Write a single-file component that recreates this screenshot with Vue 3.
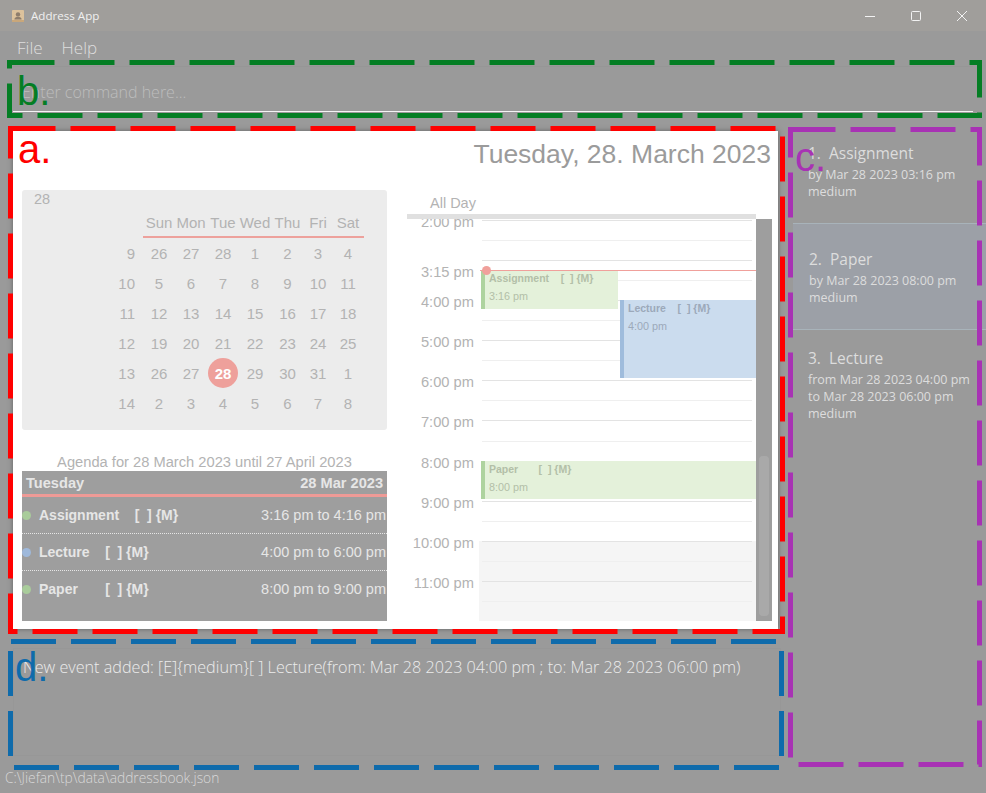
<script setup>
const weeks = [
  { wk: 9, days: [26, 27, 28, 1, 2, 3, 4] },
  { wk: 10, days: [5, 6, 7, 8, 9, 10, 11] },
  { wk: 11, days: [12, 13, 14, 15, 16, 17, 18] },
  { wk: 12, days: [19, 20, 21, 22, 23, 24, 25] },
  { wk: 13, days: [26, 27, 28, 29, 30, 31, 1] },
  { wk: 14, days: [2, 3, 4, 5, 6, 7, 8] }
]
const dayNames = ['Sun', 'Mon', 'Tue', 'Wed', 'Thu', 'Fri', 'Sat']

const agenda = [
  { id: 1, title: 'Assignment    [  ] {M}', time: '3:16 pm to 4:16 pm', color: 'green' },
  { id: 2, title: 'Lecture    [  ] {M}', time: '4:00 pm to 6:00 pm', color: 'blue' },
  { id: 3, title: 'Paper       [  ] {M}', time: '8:00 pm to 9:00 pm', color: 'green' }
]

const hours = ['2:00 pm', '', '4:00 pm', '5:00 pm', '6:00 pm', '7:00 pm', '8:00 pm', '9:00 pm', '10:00 pm', '11:00 pm']
const slots = Array.from({ length: 20 }, (_, i) => ({ id: i, hour: i % 2 === 0, off: i >= 16 }))

const events = [
  { id: 1, title: 'Assignment    [  ] {M}', time: '3:16 pm', color: 'green', top: 51, left: 74, width: 137, height: 39 },
  { id: 2, title: 'Lecture    [  ] {M}', time: '4:00 pm', color: 'blue', top: 81, left: 213, width: 136, height: 78 },
  { id: 3, title: 'Paper       [  ] {M}', time: '8:00 pm', color: 'green', top: 242, left: 74, width: 275, height: 38 }
]

const tasks = [
  { id: 1, name: 'Assignment', lines: ['by Mar 28 2023 03:16 pm', 'medium'] },
  { id: 2, name: 'Paper', lines: ['by Mar 28 2023 08:00 pm', 'medium'], selected: true },
  { id: 3, name: 'Lecture', lines: ['from Mar 28 2023 04:00 pm', 'to Mar 28 2023 06:00 pm', 'medium'] }
]
</script>

<template>
  <div class="window">
    <header class="titlebar">
      <svg class="app-icon" width="14" height="14" viewBox="0 0 14 14">
        <rect x="1" y="1" width="12" height="12" rx="1" fill="#dcc29c" />
        <rect x="1" y="11" width="12" height="2" fill="#c9a77a" />
        <circle cx="7" cy="5.4" r="2.2" fill="#8d7d6c" />
        <path d="M3.4 10.5c0-2 1.6-2.8 3.6-2.8s3.6.8 3.6 2.8z" fill="#8d7d6c" />
      </svg>
      <span class="app-name">Address App</span>
      <div class="win-btns">
        <svg width="12" height="12" viewBox="0 0 12 12"><path d="M1 6.5h10" stroke="#f2f2f2" fill="none" /></svg>
        <svg width="12" height="12" viewBox="0 0 12 12"><rect x="1.5" y="1.5" width="9" height="9" rx="1" stroke="#f2f2f2" fill="none" /></svg>
        <svg width="12" height="12" viewBox="0 0 12 12"><path d="M1 1l10 10M11 1L1 11" stroke="#f2f2f2" fill="none" /></svg>
      </div>
    </header>

    <nav class="menubar">
      <span>File</span>
      <span>Help</span>
    </nav>

    <div class="command">Enter command here...</div>

    <div class="content">
      <div class="left-col">
        <section class="calendar">
          <h1 class="cal-title">Tuesday, 28. March 2023</h1>
          <div class="cal-body">
            <div class="cal-left">
              <div class="month">
                <div class="month-num">28</div>
                <div class="month-grid">
                  <span></span>
                  <span v-for="d in dayNames" :key="d" class="dow">{{ d }}</span>
                  <template v-for="w in weeks" :key="w.wk">
                    <span class="cell wk">{{ w.wk }}</span>
                    <span
                      v-for="(d, i) in w.days"
                      :key="i"
                      class="cell"
                    ><b v-if="w.wk === 13 && d === 28" class="today">{{ d }}</b><template v-else>{{ d }}</template></span>
                  </template>
                </div>
              </div>
              <div class="agenda-title">Agenda for 28 March 2023 until 27 April 2023</div>
              <div class="agenda">
                <div class="agenda-head">
                  <span>Tuesday</span>
                  <span>28 Mar 2023</span>
                </div>
                <div v-for="a in agenda" :key="a.id" class="agenda-row">
                  <i class="dot" :class="a.color"></i>
                  <span class="agenda-name">{{ a.title }}</span>
                  <span class="agenda-time">{{ a.time }}</span>
                </div>
              </div>
            </div>

            <div class="cal-right">
              <div class="allday">All Day</div>
              <div class="allday-bar"></div>
              <div class="day-scroll">
                <div class="day-canvas">
                  <div class="hours">
                    <div v-for="(h, i) in hours" :key="i" class="hour">{{ h }}</div>
                  </div>
                  <div class="slots">
                    <div v-for="s in slots" :key="s.id" class="slot" :class="{ off: s.off }">
                      <i :class="s.hour ? 'line-hour' : 'line-half'"></i>
                    </div>
                  </div>
                  <div
                    v-for="e in events"
                    :key="e.id"
                    class="event"
                    :class="e.color"
                    :style="{ top: e.top + 'px', left: e.left + 'px', width: e.width + 'px', height: e.height + 'px' }"
                  >
                    <div class="ev-title">{{ e.title }}</div>
                    <div class="ev-time">{{ e.time }}</div>
                  </div>
                  <div class="now-label">3:15 pm</div>
                  <div class="now-line"></div>
                  <div class="now-dot"></div>
                </div>
                <div class="scrollbar"><div class="thumb"></div></div>
              </div>
            </div>
          </div>
        </section>

        <section class="result">New event added: [E]{medium}[ ] Lecture(from: Mar 28 2023 04:00 pm ; to: Mar 28 2023 06:00 pm)</section>
      </div>

      <aside class="tasks">
        <div v-for="t in tasks" :key="t.id" class="task" :class="['task-' + t.id, { selected: t.selected }]">
          <div class="task-name">{{ t.id }}.&nbsp;&nbsp;{{ t.name }}</div>
          <div v-for="l in t.lines" :key="l" class="task-line">{{ l }}</div>
        </div>
      </aside>
    </div>

    <footer class="status">C:\Jiefan\tp\data\addressbook.json</footer>

    <!-- annotation frames drawn over the screenshot -->
    <svg class="marks" width="986" height="793" viewBox="0 0 986 793">
      <path d="M9.5 62.5H979.5V115.5H9.5Z" stroke="#047e24" />
      <path d="M10.5 128.5H782.5V631.5H10.5Z" stroke="#ff0000" />
      <path d="M790.5 129.5H979.5V764.5H790.5Z" stroke="#a832b4" />
      <path d="M11 641.5H776M14 767.5H779M10.5 651V756M781.5 651V756" stroke="#0f6bab" />
    </svg>
    <span class="mark-letter mark-a">a.</span>
    <span class="mark-letter mark-b">b.</span>
    <span class="mark-letter mark-c">c.</span>
    <span class="mark-letter mark-d">d.</span>
  </div>
</template>

<style>
html, body {
  margin: 0;
  overflow: hidden;
  background: #9a9a9a;
}
</style>

<style scoped>
.window {
  position: relative;
  width: 986px;
  height: 793px;
  display: flex;
  flex-direction: column;
  overflow: hidden;
  background: #9a9a9a;
  font-family: "Open Sans", sans-serif;
  font-weight: 300;
  color: #e0e0e0;
}

.titlebar {
  height: 31px;
  flex: none;
  display: flex;
  align-items: center;
  padding-left: 11px;
  background: #a09e9b;
}
.app-name {
  margin-left: 6px;
  font-size: 11.6px;
  font-weight: 400;
  color: #f0f0f0;
}
.win-btns {
  margin-left: auto;
  display: flex;
  gap: 34px;
  padding-right: 18px;
}

.menubar {
  height: 33px;
  padding-bottom: 2px;
  flex: none;
  display: flex;
  gap: 19px;
  align-items: center;
  padding-left: 17px;
  font-size: 17px;
  color: #dedede;
}

.command {
  height: 46px;
  flex: none;
  box-sizing: border-box;
  width: 960px;
  margin-left: 13px;
  padding: 14px 0 0 9px;
  border-top: 1px solid #969696;
  border-bottom: 1px solid #f4f4f4;
  font-size: 16px;
  line-height: 22px;
  color: #bdbdbd;
}

.content {
  flex: none;
  display: flex;
  margin-top: 19px;
  height: 625px;
}
.left-col {
  width: 765px;
  margin-left: 13px;
  flex: none;
}

.calendar {
  height: 498px;
  box-sizing: border-box;
  padding: 0 6px 8px 9px;
  background: #fff;
  box-shadow: 0 0 5px rgba(60, 60, 60, 0.6);
  font-family: "Liberation Sans", sans-serif;
  font-weight: 400;
  color: #b3b3b3;
}
.cal-title {
  height: 59px;
  margin: 0;
  padding: 7px 1px 0 0;
  box-sizing: border-box;
  text-align: right;
  font-size: 26.5px;
  line-height: 32px;
  font-weight: 400;
  color: #9b9b9b;
}
.cal-body {
  display: flex;
  gap: 20px;
}
.cal-left,
.cal-right {
  width: 365px;
  flex: none;
}

.month {
  height: 240px;
  box-sizing: border-box;
  padding: 1px 0 0 12px;
  background: #ececec;
  border-radius: 3px;
}
.month-num {
  font-size: 14.5px;
  line-height: 16px;
}
.month-grid {
  display: grid;
  grid-template-columns: 32px 32px 32px 32px 32px 33px 28px 32px;
  grid-template-rows: 29px repeat(6, 30px);
  margin: 2px 0 0 77px;
  font-size: 15px;
}
.dow,
.cell {
  display: flex;
  align-items: center;
  justify-content: center;
  white-space: nowrap;
}
.cell.wk {
  justify-content: flex-end;
  padding-right: 8px;
}
.dow {
  border-bottom: 2px solid #eda19c;
  box-sizing: border-box;
}
.today {
  width: 30px;
  height: 30px;
  flex: none;
  display: flex;
  align-items: center;
  justify-content: center;
  border-radius: 50%;
  background: #eea09b;
  color: #fff;
}

.agenda-title {
  height: 41px;
  display: flex;
  align-items: flex-end;
  justify-content: center;
  font-size: 14.7px;
  line-height: 17px;
  white-space: nowrap;
}
.agenda {
  height: 150px;
  background: #9e9e9e;
  color: #e6e6e6;
  font-size: 14px;
}
.agenda-head {
  height: 26px;
  box-sizing: border-box;
  display: flex;
  justify-content: space-between;
  align-items: center;
  padding: 0 4px;
  border-bottom: 3px solid #ee9a96;
  font-size: 14.6px;
  font-weight: 700;
}
.agenda-row {
  height: 37px;
  box-sizing: border-box;
  display: flex;
  align-items: center;
  border-bottom: 1px dotted #e6e6e6;
}
.agenda-row:last-child {
  border-bottom: none;
  padding-bottom: 1px;
}
.dot {
  width: 9px;
  height: 9px;
  border-radius: 50%;
  margin-right: 8px;
  flex: none;
}
.dot.green {
  background: #a9cc9b;
}
.dot.blue {
  background: #9fb9db;
}
.agenda-name {
  font-weight: 700;
  white-space: pre;
}
.agenda-time {
  margin-left: auto;
  margin-right: 1px;
  font-size: 14.5px;
  white-space: nowrap;
}

.allday {
  height: 24px;
  box-sizing: border-box;
  padding: 5px 0 0 23px;
  font-size: 14.5px;
  line-height: 16px;
}
.allday-bar {
  width: 349px;
  height: 5px;
  background: #e0e0e0;
}
.day-scroll {
  display: flex;
  height: 402px;
}
.day-canvas {
  position: relative;
  width: 349px;
  height: 402px;
  display: flex;
  overflow: hidden;
}
.hours {
  width: 67px;
  flex: none;
  margin-top: -17px;
  text-align: right;
  font-size: 14.7px;
}
.hour {
  height: 40.1px;
  line-height: 40px;
  white-space: nowrap;
}
.slots {
  width: 277px;
  flex: none;
  margin-left: 5px;
  padding-top: 1px;
}
.slot {
  height: 20.05px;
  box-sizing: border-box;
  padding: 0 4px 0 3px;
}
.slot i {
  display: block;
  height: 1px;
}
.line-hour {
  background: #e3e3e3;
}
.line-half {
  background: #efefef;
}
.slot.off {
  background: #f5f5f5;
}

.event {
  position: absolute;
  box-sizing: border-box;
  padding-left: 4px;
  font-size: 10.5px;
  white-space: pre;
}
.event.green {
  background: #e4f1da;
  border-left: 4px solid #aed39f;
  color: #b3bfa8;
}
.event.blue {
  background: #cbdcee;
  border-left: 4px solid #9fbcdc;
  color: #9ca9ba;
}
.ev-title {
  font-weight: 700;
  line-height: 14px;
  margin-top: 1px;
}
.ev-time {
  font-size: 10.8px;
  line-height: 14px;
  margin-top: 4px;
}

.now-label {
  position: absolute;
  top: 44px;
  left: 0;
  width: 67px;
  text-align: right;
  font-size: 14.7px;
  line-height: 18px;
}
.now-line {
  position: absolute;
  top: 50.5px;
  left: 73px;
  right: 0;
  height: 1px;
  background: #f0a09b;
}
.now-dot {
  position: absolute;
  top: 46.5px;
  left: 75px;
  width: 9px;
  height: 9px;
  border-radius: 50%;
  background: #f0a09b;
}

.scrollbar {
  width: 16px;
  height: 402px;
  box-sizing: border-box;
  padding: 237px 3px 5px;
  background: #9e9e9e;
}
.thumb {
  height: 100%;
  background: #a9a9a9;
  border-radius: 4px;
}

.result {
  height: 108px;
  box-sizing: border-box;
  margin-top: 19px;
  margin-right: -3px;
  padding: 8px 0 0 9px;
  border: 1px solid #979797;
  font-size: 16.17px;
  line-height: 21px;
  white-space: nowrap;
  color: #ececec;
}

.tasks {
  width: 193px;
  margin-left: 15px;
  flex: none;
}
.task {
  box-sizing: border-box;
  padding-left: 15px;
  font-weight: 400;
  font-size: 12.5px;
  line-height: 17px;
  color: #dddddd;
}
.task-name {
  font-size: 15.5px;
  line-height: 22px;
  margin-bottom: 2px;
}
.task-1 {
  height: 92px;
  padding-top: 11px;
}
.task-2 {
  height: 107px;
  padding-top: 24px;
}
.task-3 {
  padding-top: 16.5px;
}
.selected {
  background: #9ca0a7;
  border-top: 1px solid #a8b3ba;
  border-bottom: 1px solid #a8b3ba;
  padding-left: 16px;
}

.status {
  flex: none;
  margin-top: 12px;
  padding-left: 5px;
  font-size: 13.8px;
  line-height: 19px;
  color: #d8d8d8;
}

.marks {
  position: absolute;
  left: 0;
  top: 0;
  pointer-events: none;
}
.marks path {
  fill: none;
  stroke-width: 5;
  stroke-dasharray: 45 15;
  stroke-linejoin: miter;
}
.mark-letter {
  position: absolute;
  font-family: "Liberation Sans", sans-serif;
  font-size: 40px;
  font-weight: 400;
  line-height: 46px;
}
.mark-a {
  left: 18px;
  top: 126px;
  color: #ff0000;
}
.mark-b {
  left: 17px;
  top: 68px;
  color: #047e24;
}
.mark-c {
  left: 795px;
  top: 134px;
  color: #a832b4;
}
.mark-d {
  left: 15px;
  top: 644px;
  color: #0f6bab;
}
</style>
